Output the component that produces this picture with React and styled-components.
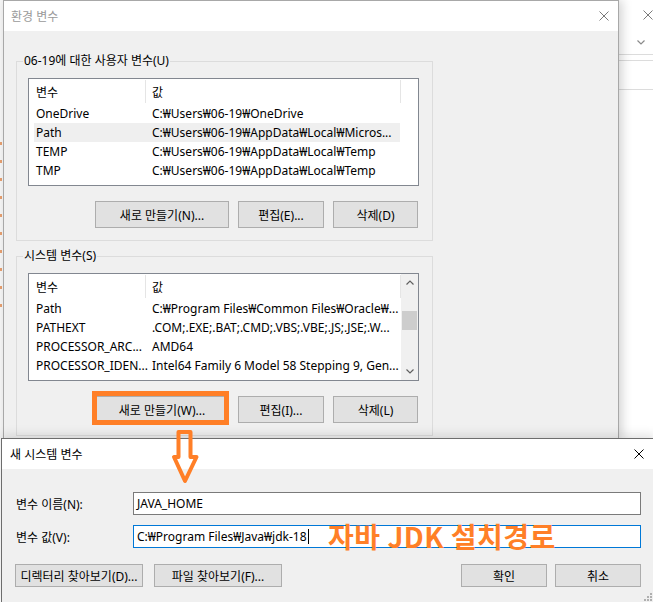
import React from "react";
import styled, { createGlobalStyle } from "styled-components";

const ORANGE = "#ff7f27";
const UI_FONT = `"Noto Sans", "Noto Sans CJK KR", sans-serif`;

const Global = createGlobalStyle`
  html, body { margin: 0; padding: 0; background: #fff; }
  body { font-family: ${UI_FONT}; font-size: 12px; color: #000; }
  * { box-sizing: border-box; }
`;

const Desktop = styled.div`
  position: relative;
  width: 653px;
  height: 602px;
  overflow: hidden;
  background: #fff;
`;

/* ---------- background windows ---------- */
const BackWindow = styled.div`
  position: absolute;
  top: 0;
  left: 619px;
  width: 200px;
  height: 602px;
  background: #fff;
  display: flex;
  flex-direction: column;
`;
const BackTitle = styled.div`
  height: 30px;
  display: flex;
  align-items: center;
  padding-left: 24px;
`;
const BackToolbar = styled.div`
  height: 24px;
  display: flex;
  align-items: center;
  padding-left: 18px;
`;
const BackRule = styled.div`
  height: 1px;
  background: #dcdcdc;
  margin-bottom: ${(p) => p.$after}px;
`;

const LeftPeek = styled.div`
  position: absolute;
  left: 0;
  top: 0;
  width: 3px;
  height: 438px;
  background: #f7f7f7;
  display: flex;
  flex-direction: column;
  gap: 15px;
  padding-top: 142px;
`;
const PeekDot = styled.span`
  display: block;
  width: 2px;
  height: 3px;
  background: #e8a070;
`;

/* ---------- dialog window ---------- */
const Window = styled.div`
  position: absolute;
  left: ${(p) => p.$x}px;
  top: ${(p) => p.$y}px;
  width: ${(p) => p.$w}px;
  height: ${(p) => p.$h}px;
  border: 1px solid ${(p) => (p.$active ? "#6d6d6d" : "#a8a8a8")};
  background: #f0f0f0;
  display: flex;
  flex-direction: column;
  box-shadow: ${(p) => p.$shadow};
`;
const TitleBar = styled.div`
  height: 30px;
  flex: none;
  background: #fff;
  display: flex;
  align-items: center;
  justify-content: space-between;
  padding-left: ${(p) => p.$padL}px;
  padding-right: ${(p) => p.$padR}px;
`;
const TitleText = styled.span`
  font-size: 12px;
  color: ${(p) => (p.$active ? "#000" : "#9a9a9a")};
`;

const CloseIcon = ({ color }) => (
  <svg width="10" height="10" viewBox="0 0 10 10">
    <path d="M0.5 0.5 L9.5 9.5 M9.5 0.5 L0.5 9.5" stroke={color} strokeWidth="1" fill="none" />
  </svg>
);

const Chevron = ({ up, color = "#606060", w = 8 }) => (
  <svg width={w} height="5" viewBox="0 0 8 5">
    <path
      d={up ? "M0.5 4.5 L4 1 L7.5 4.5" : "M0.5 0.5 L4 4 L7.5 0.5"}
      stroke={color}
      strokeWidth="1.2"
      fill="none"
    />
  </svg>
);

/* ---------- env dialog body ---------- */
const EnvBody = styled.div`
  display: flex;
  flex-direction: column;
  gap: 15px;
  padding: 30px 0 0 12px;
`;
const GroupBox = styled.div`
  position: relative;
  width: 417px;
  border: 1px solid #dcdcdc;
  padding: 16px 13px 12px 11px;
  display: flex;
  flex-direction: column;
  gap: 15px;
`;
const GroupLabel = styled.span`
  position: absolute;
  top: -9px;
  left: 6px;
  padding: 0 1px;
  line-height: 16px;
  background: #f0f0f0;
`;

const ListView = styled.div`
  width: 391px;
  height: 108px;
  border: 1px solid #828790;
  background: #fff;
  display: flex;
`;
const ListContent = styled.div`
  flex: 1;
  display: flex;
  flex-direction: column;
`;
const ListHeader = styled.div`
  height: 25px;
  display: flex;
  align-items: center;
`;
const HeaderCell = styled.div`
  width: ${(p) => p.$w}px;
  height: 23px;
  border-right: 1px solid #e5e5e5;
  padding-left: ${(p) => p.$pad}px;
  display: flex;
  align-items: center;
`;
const Row = styled.div`
  height: 19px;
  width: 366px;
  margin-left: 5px;
  display: flex;
  align-items: center;
  background: ${(p) => (p.$selected ? "#efefef" : "transparent")};
`;
const Cell = styled.div`
  width: ${(p) => (p.$w ? `${p.$w}px` : "auto")};
  flex: ${(p) => (p.$w ? "none" : "1")};
  padding-left: ${(p) => p.$pad}px;
  white-space: nowrap;
`;

const ScrollBar = styled.div`
  width: 17px;
  background: #f0f0f0;
  display: flex;
  flex-direction: column;
`;
const ScrollArrow = styled.div`
  height: 17px;
  display: flex;
  align-items: center;
  justify-content: center;
`;
const ScrollTrack = styled.div`
  flex: 1;
  padding: 20px 0 0 1px;
`;
const ScrollThumb = styled.div`
  width: 15px;
  height: 19px;
  background: #cdcdcd;
`;

const ButtonRow = styled.div`
  display: flex;
  justify-content: flex-end;
  gap: ${(p) => p.$gap}px;
  padding-right: ${(p) => p.$padR || 0}px;
`;
const Button = styled.button`
  position: relative;
  width: ${(p) => p.$w}px;
  height: ${(p) => p.$h}px;
  background: #e1e1e1;
  border: 1px solid #adadad;
  padding: 0;
  margin: 0;
  font-family: ${UI_FONT};
  font-size: 12px;
  color: #000;
  white-space: nowrap;
`;
const HighlightFrame = styled.span`
  position: absolute;
  left: -4px;
  top: -6px;
  right: -1px;
  bottom: -3px;
  border: 5px solid ${ORANGE};
`;

/* ---------- new variable dialog ---------- */
const NewBody = styled.div`
  position: relative;
  flex: 1;
  display: flex;
  flex-direction: column;
  gap: 10px;
  padding: 23px 0 0 13px;
`;
const FieldRow = styled.div`
  display: grid;
  grid-template-columns: 118px 508px;
  align-items: center;
`;
const FieldLabel = styled.span`
  padding-left: 1px;
`;
const TextBox = styled.div`
  position: relative;
  height: 23px;
  border: 1px solid ${(p) => (p.$focused ? "#0078d7" : "#7a7a7a")};
  background: #fff;
  padding-left: 3px;
  display: flex;
  align-items: center;
  white-space: nowrap;
`;
const Caret = styled.span`
  display: inline-block;
  width: 1px;
  height: 15px;
  background: #000;
  margin-left: 1px;
`;
const Annotation = styled.span`
  position: absolute;
  left: 194px;
  top: -8px;
  font-family: "Noto Sans CJK KR", sans-serif;
  font-weight: 700;
  font-size: 28px;
  line-height: 36px;
  letter-spacing: 0.5px;
  color: ${ORANGE};
  white-space: nowrap;
`;
const BottomButtons = styled.div`
  width: 626px;
  margin-top: 6px;
  display: flex;
  gap: 11px;
`;
const Spacer = styled.div`
  flex: 1;
`;
const RightButtons = styled.div`
  display: flex;
  gap: 8px;
`;
const Grip = styled.svg`
  position: absolute;
  right: 2px;
  bottom: 2px;
`;

const ArrowSvg = styled.svg`
  position: absolute;
  left: 165px;
  top: 425px;
`;

const userVars = [
  ["OneDrive", "C:₩Users₩06-19₩OneDrive"],
  ["Path", "C:₩Users₩06-19₩AppData₩Local₩Micros..."],
  ["TEMP", "C:₩Users₩06-19₩AppData₩Local₩Temp"],
  ["TMP", "C:₩Users₩06-19₩AppData₩Local₩Temp"],
];
const sysVars = [
  ["Path", "C:₩Program Files₩Common Files₩Oracle₩..."],
  ["PATHEXT", ".COM;.EXE;.BAT;.CMD;.VBS;.VBE;.JS;.JSE;.W..."],
  ["PROCESSOR_ARC...", "AMD64"],
  ["PROCESSOR_IDEN...", "Intel64 Family 6 Model 58 Stepping 9, Gen..."],
];

function VarList({ rows, selected, scroll }) {
  return (
    <ListView>
      <ListContent>
        <ListHeader>
          <HeaderCell $w={117} $pad={7}>변수</HeaderCell>
          <HeaderCell $w={255} $pad={6}>값</HeaderCell>
        </ListHeader>
        {rows.map(([k, v], i) => (
          <Row key={k} $selected={i === selected}>
            <Cell $w={111} $pad={2}>{k}</Cell>
            <Cell $pad={7}>{v}</Cell>
          </Row>
        ))}
      </ListContent>
      {scroll && (
        <ScrollBar>
          <ScrollArrow><Chevron up /></ScrollArrow>
          <ScrollTrack><ScrollThumb /></ScrollTrack>
          <ScrollArrow><Chevron /></ScrollArrow>
        </ScrollBar>
      )}
    </ListView>
  );
}

export default function App() {
  return (
    <>
      <Global />
      <Desktop>
        <BackWindow>
          <BackTitle><CloseIcon color="#7a7a7a" /></BackTitle>
          <BackToolbar><Chevron color="#8a8a8a" /></BackToolbar>
          <BackRule $after={5} />
          <BackRule $after={28} />
          <BackRule $after={0} />
        </BackWindow>

        <LeftPeek>
          {Array.from({ length: 10 }).map((_, i) => (
            <PeekDot key={i} />
          ))}
        </LeftPeek>

        <Window $x={3} $y={0} $w={616} $h={440} $shadow="3px 0 10px rgba(0,0,0,0.18)">
          <TitleBar $padL={7} $padR={9}>
            <TitleText>환경 변수</TitleText>
            <CloseIcon color="#7a7a7a" />
          </TitleBar>
          <EnvBody>
            <GroupBox>
              <GroupLabel>06-19에 대한 사용자 변수(U)</GroupLabel>
              <VarList rows={userVars} selected={1} />
              <ButtonRow $gap={9} $padR={1}>
                <Button $w={134} $h={27}>새로 만들기(N)...</Button>
                <Button $w={86} $h={27}>편집(E)...</Button>
                <Button $w={85} $h={27}>삭제(D)</Button>
              </ButtonRow>
            </GroupBox>
            <GroupBox>
              <GroupLabel>시스템 변수(S)</GroupLabel>
              <VarList rows={sysVars} scroll />
              <ButtonRow $gap={9} $padR={1}>
                <Button $w={134} $h={27}>
                  새로 만들기(W)...
                  <HighlightFrame />
                </Button>
                <Button $w={86} $h={27}>편집(I)...</Button>
                <Button $w={85} $h={27}>삭제(L)</Button>
              </ButtonRow>
            </GroupBox>
          </EnvBody>
        </Window>

        <Window $x={1} $y={438} $w={654} $h={166} $active $shadow="0 -3px 10px rgba(0,0,0,0.12)">
          <TitleBar $padL={8} $padR={10}>
            <TitleText $active>새 시스템 변수</TitleText>
            <CloseIcon color="#000" />
          </TitleBar>
          <NewBody>
            <FieldRow>
              <FieldLabel>변수 이름(N):</FieldLabel>
              <TextBox>JAVA_HOME</TextBox>
            </FieldRow>
            <FieldRow>
              <FieldLabel>변수 값(V):</FieldLabel>
              <TextBox $focused>
                C:₩Program Files₩Java₩jdk-18
                <Caret />
                <Annotation>자바 JDK 설치경로</Annotation>
              </TextBox>
            </FieldRow>
            <BottomButtons>
              <Button $w={128} $h={23}>디렉터리 찾아보기(D)...</Button>
              <Button $w={128} $h={23}>파일 찾아보기(F)...</Button>
              <Spacer />
              <RightButtons>
                <Button $w={86} $h={23}>확인</Button>
                <Button $w={86} $h={23}>취소</Button>
              </RightButtons>
            </BottomButtons>
            <Grip width="8" height="8" viewBox="0 0 8 8">
              {[[6, 0], [3, 3], [6, 3], [0, 6], [3, 6], [6, 6]].map(([x, y]) => (
                <rect key={`${x}-${y}`} x={x} y={y} width="2" height="2" fill="#b0b0b0" />
              ))}
            </Grip>
          </NewBody>
        </Window>

        <ArrowSvg width="40" height="62" viewBox="0 0 40 62">
          <path
            d="M13.5 7 L25.5 7 L25.5 32 L31.5 32 L20 56 L9 32 L13.5 32 Z"
            stroke={ORANGE}
            strokeWidth="4"
            strokeLinejoin="round"
            fill="none"
          />
        </ArrowSvg>
      </Desktop>
    </>
  );
}
